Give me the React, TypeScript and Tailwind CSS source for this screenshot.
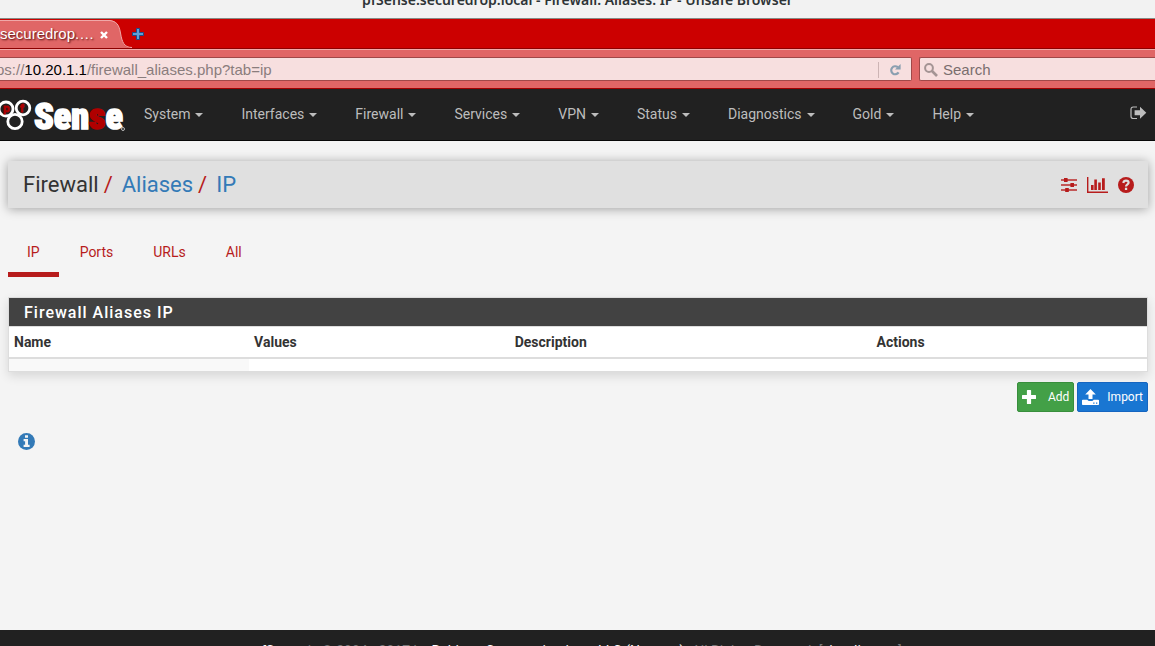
import type { ReactNode } from "react";

const menus = [
  "System",
  "Interfaces",
  "Firewall",
  "Services",
  "VPN",
  "Status",
  "Diagnostics",
  "Gold",
  "Help",
];

const tabs = ["IP", "Ports", "URLs", "All"];

function ReloadIcon() {
  return (
    <svg width="12" height="12" viewBox="0 0 12 12" fill="none">
      <path d="M8.8 3.2A4 4 0 1 0 9.6 8.4" stroke="#8a9fb0" strokeWidth="2.2" />
      <path d="M11.6 0v5.6H6z" fill="#8a9fb0" />
    </svg>
  );
}

function SearchIcon() {
  return (
    <svg width="14" height="14" viewBox="0 0 14 14" fill="none" stroke="#a49494">
      <circle cx="5" cy="5" r="3.9" strokeWidth="2" />
      <path d="M8 8l5 5" strokeWidth="2.6" />
    </svg>
  );
}

function SignOutIcon() {
  return (
    <svg width="17" height="14" viewBox="0 0 17 14" fill="#bdbdbd">
      <path
        d="M7 1H3.2Q1 1 1 3.2v7.1q0 2.2 2.2 2.2H7"
        fill="none"
        stroke="#bdbdbd"
        strokeWidth="1.2"
      />
      <path d="M10 .8l6.3 5.9L10 12.7V9.3H4.6V4.2H10z" />
    </svg>
  );
}

function SlidersIcon() {
  return (
    <svg width="16" height="14" viewBox="0 0 16 14" fill="#b71c1c">
      <path d="M0 1h16v2H0zM0 6h16v2H0zM0 11h16v2H0z" opacity=".7" />
      <path d="M3 0h3.6v4H3zM9.4 5H13v4H9.4zM4.2 10h3.6v4H4.2z" />
    </svg>
  );
}

function BarChartIcon() {
  return (
    <svg width="21" height="16" viewBox="0 0 21 16" fill="#b71c1c">
      <path d="M0 0h1.4v14.4H21V16H0z" />
      <path d="M4 8h2.6v5H4zM7.3 2.5h2.6V13H7.3zM11.2 5.5h2.6V13h-2.6zM15 1.2h2.8V13H15z" />
    </svg>
  );
}

function HelpIcon() {
  return (
    <svg width="16" height="16" viewBox="0 0 16 16" fill="none">
      <circle cx="8" cy="8" r="8" fill="#b71c1c" />
      <path
        d="M5.300 6C5.600 4.400 6.600 3.700 8 3.700c1.500 0 2.600.9 2.600 2.100C10.600 7.400 8 7.400 8 9.600"
        stroke="#e0e0e0"
        strokeWidth="2.200"
      />
      <path d="M6.900 10.700h2.300V13H6.900z" fill="#e0e0e0" />
    </svg>
  );
}

function InfoIcon() {
  return (
    <svg width="17" height="17" viewBox="0 0 17 17">
      <circle cx="8.500" cy="8.500" r="8.500" fill="#337ab7" />
      <path d="M7 2.300h3v2.400H7zM5.600 6h4.400v5.800h1.600v2.300H5.600v-2.300h1.500V8.300H5.600z" fill="#f4f4f4" />
    </svg>
  );
}

function PlusIcon() {
  return (
    <svg width="14" height="14" viewBox="0 0 14 14" fill="#fff">
      <path d="M5.500 0h3q.6 0 .6.6v4.300h4.300q.6 0 .6.6v3q0 .6-.6.6H9.100v4.300q0 .6-.6.6h-3q-.6 0-.6-.6V9.100H.6Q0 9.100 0 8.500v-3q0-.6.6-.6h4.300V.6q0-.6.6-.6z" />
    </svg>
  );
}

function UploadIcon() {
  return (
    <svg width="17" height="16" viewBox="0 0 17 16" fill="#fff">
      <path d="M8.500 0l5.300 5.600h-3.300V10H6.500V5.600H3.200z" />
      <path
        fillRule="evenodd"
        d="M.8 10.800h4.500q.8 1.200 2 1.200h2.400q1.200 0 2-1.200h4.500q.8 0 .8.8v3.600q0 .8-.8.8H.8q-.8 0-.8-.8v-3.600q0-.8.8-.8zM11.200 13.500v1.200h1.300v-1.200zM14 13.500v1.200h1.300v-1.200z"
      />
    </svg>
  );
}

function Logo() {
  return (
    <svg width="126" height="34" viewBox="0 0 126 34" role="img" aria-label="pfSense">
      <g fill="none" stroke="#fff" strokeWidth="2.800">
        <circle cx="6" cy="11" r="7" />
        <circle cx="23" cy="10" r="6.800" />
        <circle cx="15" cy="23.500" r="7.200" />
      </g>
      <g
        fill="#b00000"
        stroke="#b00000"
        strokeWidth=".8"
        fontFamily="'Liberation Sans', sans-serif"
        fontWeight="700"
        fontSize="11"
      >
        <text x="3" y="14">p</text>
        <text x="20" y="14">f</text>
      </g>
      <text
        x="34"
        y="31"
        fontFamily="'Roboto Condensed', 'Open Sans Condensed', 'Liberation Sans', sans-serif"
        fontWeight="900"
        fontSize="36"
        fill="#fff"
        stroke="#fff"
        strokeWidth="1.600"
      >
        Sen<tspan fill="#b00000" stroke="#b00000">s</tspan>e
      </text>
      <circle cx="123" cy="31" r="1.500" fill="none" stroke="#bbb" />
    </svg>
  );
}

function ActionButton({
  icon,
  className,
  children,
}: {
  icon: ReactNode;
  className: string;
  children: ReactNode;
}) {
  return (
    <button
      className={`flex h-[30px] items-center rounded-[2px] border px-1 text-[12px] text-white ${className}`}
    >
      {icon}
      {children}
    </button>
  );
}

function BrowserChrome() {
  return (
    <header className="shrink-0">
      {/* Window title */}
      <div className="flex h-[19px] items-end justify-center overflow-hidden border-b border-[#888a85] bg-[#f2f2f2] pb-2 font-['Noto_Sans','Open_Sans',sans-serif] text-[14px] leading-5 font-semibold text-[#2e3436]">
        pfSense.securedrop.local - Firewall: Aliases: IP - Unsafe Browser
      </div>

      {/* Tab strip */}
      <div className="flex h-[30px] items-end border-b border-[#8c0000] bg-[#cc0000] font-['Liberation_Sans',Arial,sans-serif]">
        <div className="flex h-7 items-center border-t border-[#f0a8a8] bg-[#e06666] text-[15px] text-white">
          <span className="[text-shadow:1px_1px_2px_#400000]">securedrop.…</span>
          <button aria-label="Close tab" className="ml-1 flex size-3 items-center justify-center">
            <svg width="8" height="8" viewBox="0 0 8 8" stroke="#fff" strokeWidth="2.400">
              <path d="M1 1l6 6M7 1L1 7" />
            </svg>
          </button>
        </div>
        <svg width="22" height="28" viewBox="0 0 22 28">
          <path d="M0 0C6 1 9 4 10.500 13C12 22 14 28 22 28H0z" fill="#e06666" />
          <path d="M0 .5C6 1.500 9 4 10.500 13C12 22 14 27.500 22 27.500" fill="none" stroke="#f0a8a8" />
        </svg>
        <button aria-label="New tab" className="mb-2 flex size-3 items-center justify-center">
          <svg width="12" height="12" viewBox="0 0 12 12">
            <path d="M4.500.5h3v4h4v3h-4v4h-3v-4h-4v-3h4z" fill="#5f9fd8" stroke="#204a87" />
          </svg>
        </button>
      </div>

      {/* Address and search fields */}
      <div className="flex h-10 gap-[7px] border-t border-b border-t-[#f0a8a8] border-b-[#a00000] bg-[#e06666] py-[7px] font-['Liberation_Sans',Arial,sans-serif] text-[15px]">
        <div className="flex flex-1 items-center rounded-r-[2px] border border-l-0 border-[#a04848] bg-[#f7dfdf] pt-0.5">
          <div className="relative flex-1 overflow-hidden">
            <div aria-hidden="true" className="-ml-1 text-[#8a7d7d]">
              ps://<span className="text-black">10.20.1.1</span>/firewall_aliases.php?tab=ip
            </div>
            <input
              aria-label="Address"
              className="absolute inset-0 w-full text-transparent caret-black outline-none"
            />
          </div>
          <button
            aria-label="Reload"
            className="flex h-4 w-[33px] items-center justify-center border-l border-[#cdb4b4]"
          >
            <ReloadIcon />
          </button>
        </div>
        <label className="flex w-[236px] items-center gap-[5px] rounded-l-[2px] border border-r-0 border-[#a04848] bg-[#f7dfdf] pt-0.5 pl-1">
          <SearchIcon />
          <input
            aria-label="Search"
            placeholder="Search"
            className="min-w-0 flex-1 outline-none placeholder:text-[#7a6e6e]"
          />
        </label>
      </div>
    </header>
  );
}

function NavBar() {
  return (
    <nav className="flex h-[52px] shrink-0 items-center border-b border-[#080808] bg-[#212121] pr-2">
      <a href="#" className="w-[125px]">
        <Logo />
      </a>
      <ul className="flex flex-1">
        {menus.map((menu) => (
          <li key={menu}>
            <a href="#" className="flex items-center gap-[5px] px-[19px] text-[14px] text-[#bdbdbd]">
              {menu}
              <span className="border-x-4 border-t-4 border-x-transparent border-t-[#bdbdbd]" />
            </a>
          </li>
        ))}
      </ul>
      <a href="#" aria-label="Logout" className="-mt-1">
        <SignOutIcon />
      </a>
    </nav>
  );
}

function AliasTable() {
  return (
    <section className="mt-5 border border-[#dddddd] bg-white shadow-[0_4px_10px_rgba(0,0,0,0.12)]">
      <h2 className="h-7 bg-[#424242] pl-[15px] text-[16px] leading-[30px] font-medium tracking-[1px] text-white">
        Firewall Aliases IP
      </h2>
      <table className="w-full table-fixed border-t border-[#dddddd] text-left text-[14px] leading-5">
        <thead>
          <tr className="border-b-2 border-[#dddddd]">
            <th className="w-[21.1%] p-[5px] font-bold">Name</th>
            <th className="w-[22.9%] p-[5px] font-bold">Values</th>
            <th className="w-[31.8%] p-[5px] font-bold">Description</th>
            <th className="p-[5px] font-bold">Actions</th>
          </tr>
        </thead>
        <tbody>
          <tr className="h-[13px]">
            <td className="bg-[#f9f9f9]" />
            <td />
            <td />
            <td />
          </tr>
        </tbody>
      </table>
    </section>
  );
}

export default function App() {
  return (
    <div className="flex h-screen flex-col overflow-hidden bg-[#f4f4f4] font-[Roboto,sans-serif] text-[#333333]">
      <BrowserChrome />
      <NavBar />

      <main className="flex-1 px-2 pt-5 pr-[7px]">
        <div className="flex h-[47px] items-center justify-between bg-[#e0e0e0] pr-3.5 pl-[15px] shadow-[0_1px_10px_rgba(0,0,0,0.35)]">
          <ol className="flex text-[22px]">
            <li>Firewall</li>
            <li>
              <span className="pr-[9px] pl-[5px] text-[#b71c1c]">/</span>
              <a href="#" className="text-[#337ab7]">Aliases</a>
            </li>
            <li>
              <span className="pr-[9px] pl-[5px] text-[#b71c1c]">/</span>
              <a href="#" className="text-[#337ab7]">IP</a>
            </li>
          </ol>
          <div className="flex items-center gap-2.5">
            <a href="#" aria-label="Settings"><SlidersIcon /></a>
            <a href="#" aria-label="Status"><BarChartIcon /></a>
            <a href="#" aria-label="Help"><HelpIcon /></a>
          </div>
        </div>

        <ul className="mt-5 flex gap-0.5 text-[14px] text-[#b71c1c]">
          {tabs.map((tab) => (
            <li key={tab}>
              <a
                href="#"
                className={`block border-b-5 px-[19px] pt-[14px] pb-[10px] leading-5 ${
                  tab === "IP" ? "border-[#b71c1c]" : "border-transparent"
                }`}
              >
                {tab}
              </a>
            </li>
          ))}
        </ul>

        <AliasTable />

        <div className="mt-2.5 flex justify-end gap-[3px]">
          <ActionButton icon={<PlusIcon />} className="gap-3 border-[#388e3c] bg-[#43a047]">
            Add
          </ActionButton>
          <ActionButton icon={<UploadIcon />} className="gap-2 border-[#1565c0] bg-[#1976d2]">
            Import
          </ActionButton>
        </div>

        <button aria-label="Show info" className="mt-[21px] ml-2.5 block">
          <InfoIcon />
        </button>
      </main>

      <footer className="h-4 shrink-0 overflow-hidden bg-[#212121] pt-[11px] text-center text-[14px] leading-5 text-[#777777]">
        <a href="#" className="text-white">pfSense</a> is © 2004 - 2017 by{" "}
        <a href="#" className="text-white">Rubicon Communications, LLC (Netgate)</a>. All Rights
        Reserved. [<a href="#" className="text-white">view license</a>]
      </footer>
    </div>
  );
}
